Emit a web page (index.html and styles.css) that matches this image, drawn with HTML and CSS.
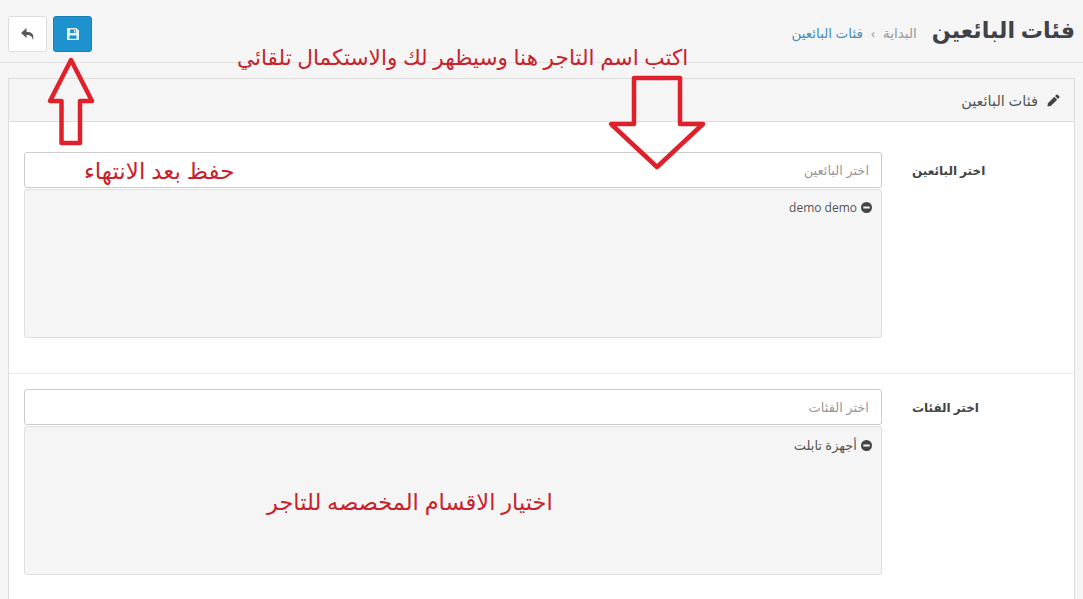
FILE: index.html
```html
<!DOCTYPE html>
<html lang="ar" dir="rtl">
<head>
    <meta charset="utf-8">
    <title>فئات البائعين</title>
    <link rel="stylesheet" href="styles.css">
</head>
<body>
    <div class="page-header">
        <div class="heading">
            <h1>فئات البائعين</h1>
            <ul class="breadcrumb">
                <li>البداية</li>
                <li class="sep">›</li>
                <li class="current">فئات البائعين</li>
            </ul>
        </div>
        <div class="actions">
            <button class="btn btn-primary" type="button">
                <svg width="14" height="14" viewBox="0 0 14 14"><path fill="#e3f3fb" fill-rule="evenodd" d="M2 1h8.500L13 3.500V12a1 1 0 0 1-1 1H2a1 1 0 0 1-1-1V2a1 1 0 0 1 1-1zM4 2.500V6h6V2.500zM3.500 8.500V11.800h7V8.500zM8 3h1.300v2.400H8z"/></svg>
            </button>
            <button class="btn btn-default" type="button">
                <svg width="16" height="14" viewBox="0 0 16 14"><path fill="#5a5a5a" d="M6.500 1 1 6l5.500 5V8c3.500 0 5.500 .8 6.500 5 1.500-5.500-1-8.300-6.500-8.300z"/></svg>
            </button>
        </div>
    </div>

    <div class="panel">
        <div class="panel-heading">
            <svg width="13" height="13" viewBox="0 0 13 13"><path fill="#444" d="M9.300 .8a1 1 0 0 1 1.400 0l1.500 1.500a1 1 0 0 1 0 1.400L11 4.900 8.100 2zM7.300 2.800l2.900 2.900-6.400 6.400L.5 12.500l.4-3.300z"/></svg>
            <span>فئات البائعين</span>
        </div>
        <div class="panel-body">
            <div class="form-row">
                <label>اختر البائعين</label>
                <div class="field">
                    <input type="text" placeholder="اختر البائعين">
                    <div class="well">
                        <div class="well-item">
                            <svg class="minus" width="11" height="11" viewBox="0 0 11 11"><circle cx="5.500" cy="5.500" r="5.500" fill="#444"/><rect x="2.300" y="4.500" width="6.400" height="2" fill="#f5f5f5"/></svg>
                            <span class="latin">demo demo</span>
                        </div>
                    </div>
                </div>
            </div>
            <div class="form-row">
                <label>اختر الفئات</label>
                <div class="field">
                    <input type="text" placeholder="اختر الفئات">
                    <div class="well">
                        <div class="well-item">
                            <svg class="minus" width="11" height="11" viewBox="0 0 11 11"><circle cx="5.500" cy="5.500" r="5.500" fill="#444"/><rect x="2.300" y="4.500" width="6.400" height="2" fill="#f5f5f5"/></svg>
                            <span>أجهزة تابلت</span>
                        </div>
                    </div>
                </div>
            </div>
        </div>
    </div>

    <!-- red notes drawn over the screenshot -->
    <div class="note note-top">اكتب اسم التاجر هنا وسيظهر لك والاستكمال تلقائي</div>
    <div class="note note-save">حفظ بعد الانتهاء</div>
    <div class="note note-cats">اختيار الاقسام المخصصه للتاجر</div>

    <svg class="arrow arrow-up" width="50" height="92" viewBox="0 0 50 92">
        <path d="M25 4 4 45H15.500V87H34V45H46z"/>
    </svg>
    <svg class="arrow arrow-down" width="102" height="98" viewBox="0 0 102 98">
        <path d="M27 3H73V49H96L50 92 4 49H27z"/>
    </svg>
</body>
</html>
```

FILE: styles.css
```css
html, body {
    height: 100%;
}

body {
    margin: 0;
    height: 100vh;
    overflow: hidden;
    position: relative;
    background: #f5f5f5;
    font-family: "Open Sans", "DejaVu Sans", sans-serif;
    font-size: 12px;
    color: #555;
}

.page-header {
    display: flex;
    justify-content: space-between;
    align-items: flex-start;
    box-sizing: border-box;
    height: 63px;
    padding: 14px 8px 0;
    border-bottom: 1px solid #e4e4e4;
}

.heading {
    display: flex;
    align-items: center;
    gap: 15px;
    height: 30px;
}

h1 {
    margin: 0;
    font-size: 22.200px;
    font-weight: bold;
    color: #3f4249;
}

.breadcrumb {
    display: flex;
    gap: 8px;
    margin: 8px 0 0;
    padding: 0;
    list-style: none;
    font-size: 13.500px;
    color: #999;
}

.breadcrumb .current {
    color: #4a8fb5;
}

.actions {
    display: flex;
    gap: 6px;
    margin-top: 2px;
}

.btn {
    display: flex;
    align-items: center;
    justify-content: center;
    width: 39px;
    height: 36px;
    padding: 0;
    border-radius: 3px;
    border: 1px solid #ddd;
}

.btn-default {
    background: #fff;
}

.btn-primary {
    background: #1e91cf;
    border-color: #1b7eb4;
}

.panel {
    margin: 15px 8px 0;
    background: #fff;
    border: 1px solid #ddd;
    border-bottom: 0;
}

.panel-heading {
    display: flex;
    align-items: center;
    gap: 9px;
    height: 42px;
    padding: 0 14px;
    background: #f5f5f5;
    border-bottom: 1px solid #ddd;
    font-size: 14.500px;
    color: #555;
}

.form-row {
    display: flex;
    gap: 30px;
    padding: 15px 15px 35px;
    border-bottom: 1px solid #ededed;
}

.panel-body .form-row:first-child {
    padding-top: 30px;
}

.form-row label {
    flex: 0 0 147px;
    padding-top: 10px;
    text-align: left;
    font-size: 12px;
    font-weight: bold;
    color: #444;
}

.field {
    flex: 1;
}

.field input {
    display: block;
    width: 100%;
    height: 36px;
    box-sizing: border-box;
    padding: 0 12px;
    background: #fff;
    border: 1px solid #ccc;
    border-radius: 3px;
    font-family: inherit;
    font-size: 13px;
}

.field input::placeholder {
    color: #999;
}

.well {
    height: 149px;
    box-sizing: border-box;
    margin-top: 1px;
    padding: 9px 9px;
    background: #f5f5f5;
    border: 1px solid #e0e0e0;
    border-radius: 3px;
}

.well-item {
    display: flex;
    align-items: center;
    gap: 4px;
    font-size: 13px;
    color: #555;
}

.latin {
    font-size: 12px;
}

.note {
    position: absolute;
    color: #c8232c;
    white-space: nowrap;
}

.note-top {
    left: 237px;
    top: 42px;
    font-size: 21.600px;
}

.note-save {
    left: 84px;
    top: 154px;
    font-size: 23px;
}

.note-cats {
    left: 267px;
    top: 486px;
    font-size: 22.500px;
}

.arrow {
    position: absolute;
}

.arrow path {
    fill: none;
    stroke: #e0202a;
    stroke-width: 4.500;
    stroke-linejoin: round;
}

.arrow-up {
    left: 46px;
    top: 56px;
}

.arrow-down {
    left: 607px;
    top: 75px;
}
```
